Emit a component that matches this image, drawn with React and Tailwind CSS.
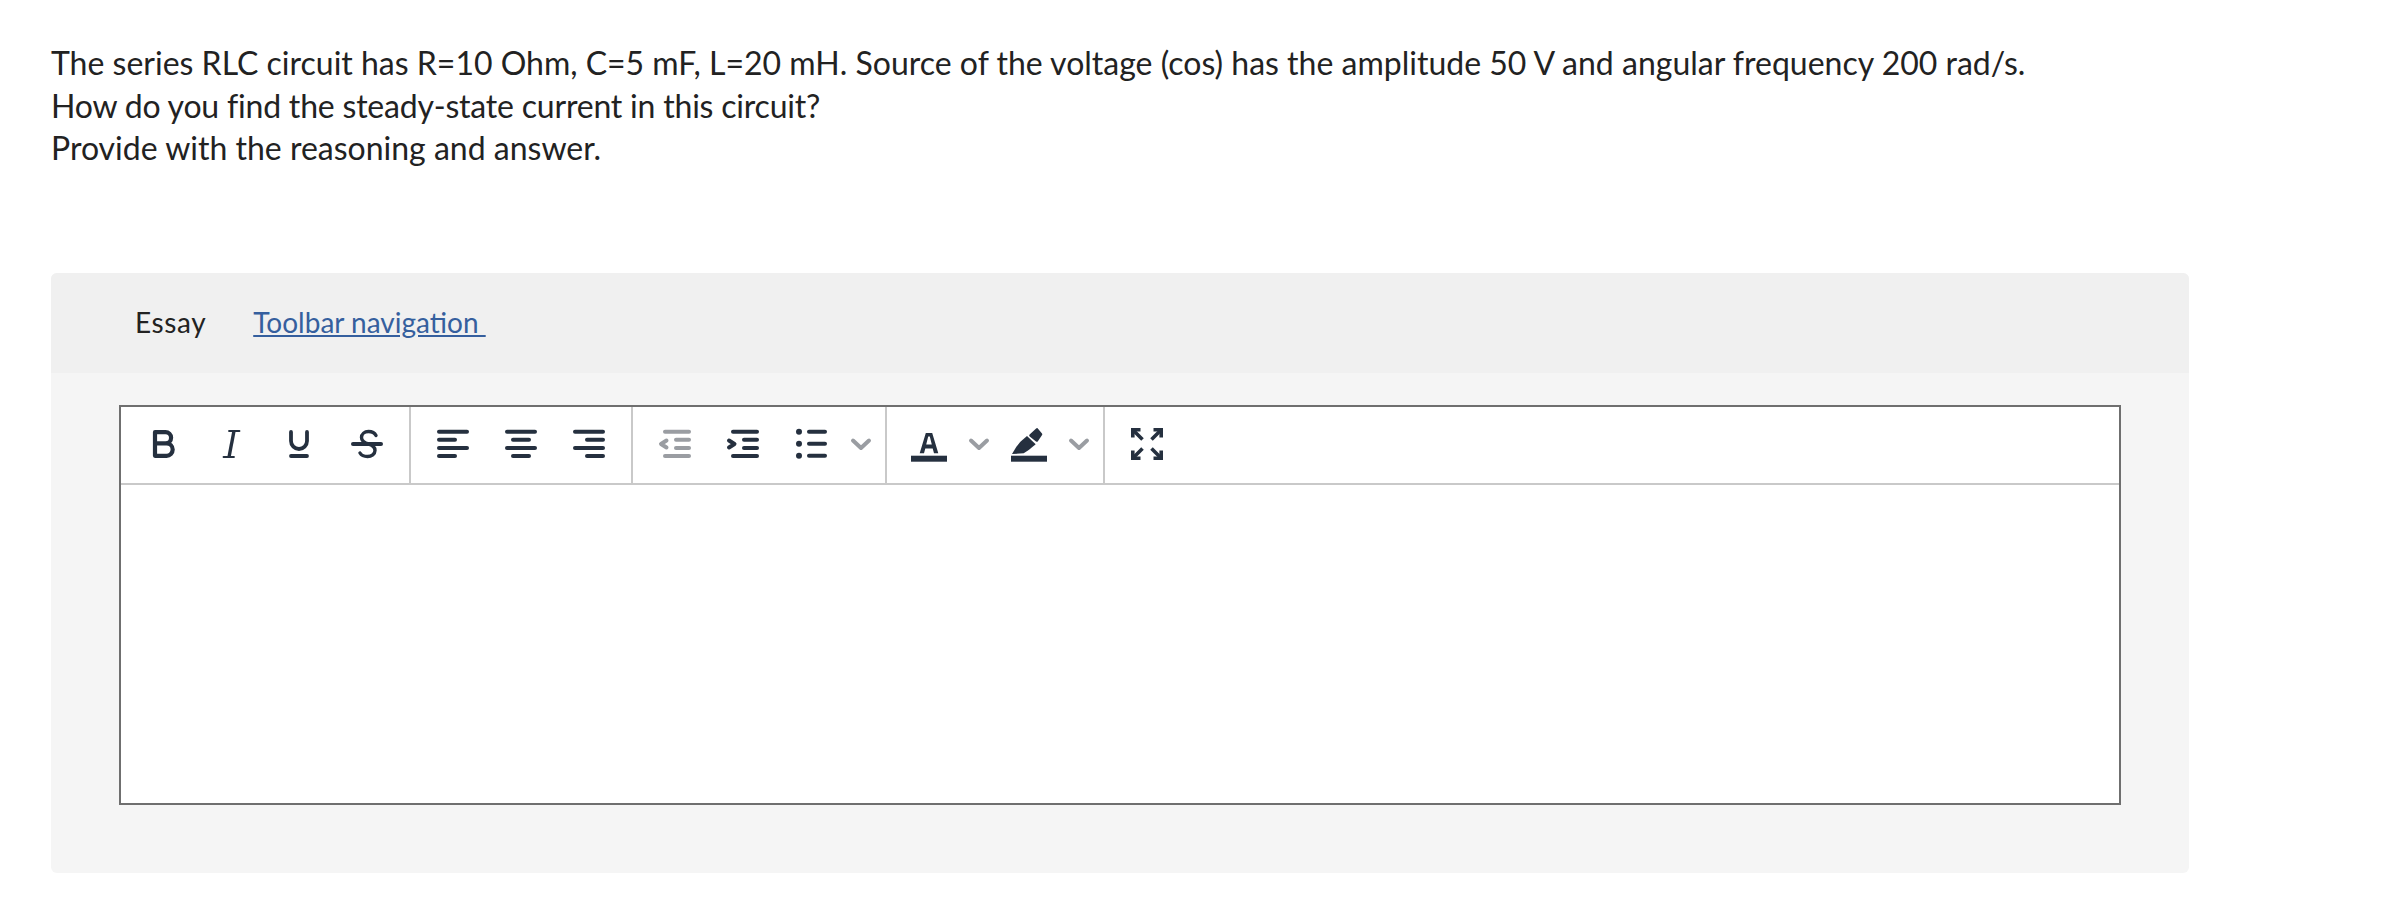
const C = "#25303f";
const G = "#9a9da2";
const Ic = ({ children, w = 40 }) => (
  <svg width={w} height="40" viewBox={`0 0 ${w} 40`} fill="none" stroke={C} strokeWidth="4" strokeLinecap="round" strokeLinejoin="round">{children}</svg>
);
const Btn = ({ children, w = "w-[68px]" }) => <div className={`${w} h-full flex items-center justify-center`}>{children}</div>;
const Lines = ({ spec, color = C }) => spec.map(([a, b, y], i) => <path key={i} d={`M${a} ${y}H${b}`} stroke={color} />);
const Chev = () => (
  <Btn w="w-[32px]"><Ic w={32}><path d="M8 16.5L16 24L24 16.5" stroke={G} /></Ic></Btn>
);
const Group = ({ children, last }) => (
  <div className={`flex h-full items-center px-[8px] pb-[2px] ${last ? "" : "border-r-2 border-[#c9c9c9]"}`}>{children}</div>
);
const Y = [7.7, 15.8, 24, 32];

export default function App() {
  return (
    <div className="w-[2406px] h-[922px] bg-white pl-[51px] pt-[42px] text-[#222]" style={{ fontFamily: '"Lato", sans-serif' }}>
      <div className="text-[32px] leading-[42.5px] whitespace-nowrap">
        <p>The series RLC circuit has R=10 Ohm, C=5 mF, L=20 mH. Source of the voltage (cos) has the amplitude 50 V and angular frequency 200 rad/s.</p>
        <p className="tracking-[-0.2px]">How do you find the steady-state current in this circuit?</p>
        <p>Provide with the reasoning and answer.</p>
      </div>
      <div className="mt-[103.5px] w-[2138px] h-[600px] rounded-[6px] bg-[#f5f5f5] overflow-hidden">
        <div className="h-[100px] bg-[#f0f0f0] pl-[84px] pb-[3px] flex items-center gap-[47px] text-[28px]">
          <span className="tracking-[0.6px]">Essay</span>
          <a className="text-[#355f9e] underline whitespace-pre">Toolbar navigation </a>
        </div>
        <div className="ml-[68px] mt-[32px] w-[2002px] h-[400px] border-2 border-[#6f6f6f] bg-white">
          <div className="h-[78px] border-b-2 border-[#c9c9c9] flex items-center">
            <Group>
              <Btn><Ic><path d="M12 8.2H22.5a5.6 5.6 0 0 1 0 11.2H12V8.2ZM12 19.4H23.5a6.2 6.2 0 0 1 0 12.4H12V19.4Z" strokeWidth="4.2" strokeLinejoin="round" /></Ic></Btn>
              <Btn><Ic>
                <path d="M23 7L18 33" strokeWidth="3.4" strokeLinecap="butt" />
                <path d="M18 7H28.5M12.5 33H23" strokeWidth="1.8" />
              </Ic></Btn>
              <Btn><Ic><path d="M12 8V17a8 8 0 0 0 16 0V8M12 32H28" strokeWidth="3.8" /></Ic></Btn>
              <Btn><Ic><path d="M29 11.5C27.5 8.5 24.5 7.5 21.5 7.5C17.5 7.5 14.5 10 14.5 13.5C14.5 17 18 19 21.5 20C25 21 28 23 28 26.5C28 30 24.5 32.5 20.5 32.5C17.5 32.5 14.5 31.5 13 29" strokeWidth="3.4" /><path d="M6 20H34" /></Ic></Btn>
            </Group>
            <Group>
              <Btn><Ic><Lines spec={[[6, 34, Y[0]], [6, 22, Y[1]], [6, 34, Y[2]], [6, 22, Y[3]]]} /></Ic></Btn>
              <Btn><Ic><Lines spec={[[6, 34, Y[0]], [12, 28, Y[1]], [6, 34, Y[2]], [12, 28, Y[3]]]} /></Ic></Btn>
              <Btn><Ic><Lines spec={[[6, 34, Y[0]], [18, 34, Y[1]], [6, 34, Y[2]], [18, 34, Y[3]]]} /></Ic></Btn>
            </Group>
            <Group>
              <Btn><Ic><Lines color={G} spec={[[10, 34, Y[0]], [21, 34, Y[1]], [21, 34, Y[2]], [10, 34, Y[3]]]} /><path d="M11.5 16.5L6 20L11.5 23.5" stroke={G} /></Ic></Btn>
              <Btn><Ic><Lines spec={[[10, 34, Y[0]], [21, 34, Y[1]], [21, 34, Y[2]], [10, 34, Y[3]]]} /><path d="M6 16.5L11.5 20L6 23.5" /></Ic></Btn>
              <Btn><Ic>
                <Lines spec={[[18, 34, 7.7], [18, 34, 19.8], [18, 34, 31.8]]} />
                <circle cx="8" cy="7.7" r="3" fill={C} stroke="none" />
                <circle cx="8" cy="19.8" r="3" fill={C} stroke="none" />
                <circle cx="8" cy="31.8" r="3" fill={C} stroke="none" />
              </Ic></Btn>
              <Chev />
            </Group>
            <Group>
              <Btn><Ic>
                <path d="M10.7 29.3L16.8 9H23.2L29.3 29.3H25L23.7 24.5H16.3L15 29.3ZM17.2 20.5H22.8L20.8 12.5H19.2Z" fill={C} fillRule="evenodd" stroke="none" />
                <rect x="2" y="31.7" width="36" height="6" fill={C} stroke="none" />
              </Ic></Btn>
              <Chev />
              <Btn><Ic>
                <path d="M11.4 17.7L18 12L26.7 20.3L19.7 26L14.7 29.3L3 30L7.4 22.7Z" fill={C} stroke="none" />
                <path d="M21.5 11.5L28 5.5L32 10.3L27.8 16.5Z" fill={C} strokeWidth="2.6" stroke={C} />
                <rect x="2" y="31.7" width="36" height="6" fill={C} stroke="none" />
              </Ic></Btn>
              <Chev />
            </Group>
            <Group last>
              <Btn><Ic>
                <path d="M5.8 13.5V5.8H13.5M34.2 13.5V5.8H26.5M5.8 26.5V34.2H13.5M34.2 26.5V34.2H26.5" strokeWidth="3.6" strokeLinecap="butt" strokeLinejoin="miter" />
                <path d="M7 7L15.5 15.5M33 7L24.5 15.5M7 33L15.5 24.5M33 33L24.5 24.5" strokeWidth="3.6" strokeLinecap="butt" />
              </Ic></Btn>
            </Group>
          </div>
        </div>
      </div>
    </div>
  );
}
